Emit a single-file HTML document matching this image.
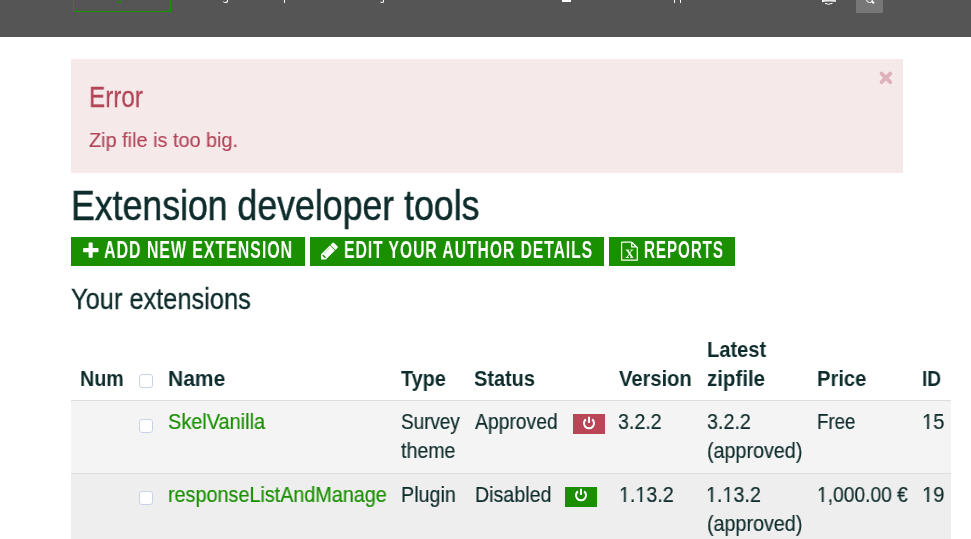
<!DOCTYPE html><html><head><meta charset="utf-8"><title>Extension developer tools</title><style>
*{margin:0;padding:0;box-sizing:border-box}
html,body{width:971px;height:539px;overflow:hidden;background:#fff;font-family:"Liberation Sans",sans-serif}
.t{position:absolute;white-space:nowrap;line-height:1;transform-origin:0 0;will-change:transform}
.r{position:absolute}
.one{display:inline-block;clip-path:polygon(0 0,100% 0,100% 15.8px,7.35px 15.8px,7.35px 100%,5.2px 100%,5.2px 15.8px,0 15.8px)}
</style></head><body>
<div class="r" style="left:0;top:0;width:971px;height:37px;background:#555"></div>
<div class="r" style="left:73px;top:-20px;width:98px;height:32px;border:1px solid #1a8f00"></div>
<div class="r" style="left:116px;top:-3px;width:5px;height:6px;border:1.5px solid #1a8f00;border-top:none;border-left:none;border-radius:0 0 3px 3px"></div>
<div class="r" style="left:223px;top:-3px;width:5px;height:6px;border:1.5px solid #fff;border-top:none;border-left:none;border-radius:0 0 3px 3px"></div>
<div class="r" style="left:284.2px;top:0;width:1.3px;height:3px;background:#fff"></div>
<div class="r" style="left:380px;top:-3px;width:4px;height:6px;border:1.5px solid #fff;border-top:none;border-left:none;border-radius:0 0 3px 3px"></div>
<div class="r" style="left:562px;top:0;width:9px;height:1.5px;background:#fff"></div>
<div class="r" style="left:673.8px;top:0;width:1.4px;height:3px;background:#fff"></div>
<div class="r" style="left:679.8px;top:0;width:1.4px;height:3px;background:#fff"></div>
<svg class="r" style="left:815px;top:0" width="30" height="8" viewBox="0 0 30 8"><path d="M7 0 H21 L20.8 1.9 L15 1.6 L9.5 1.8 L7.5 2.2 Z" fill="#fff" fill-opacity="0.85"/><path d="M7.6 0 V2" stroke="#fff" stroke-width="1.2"/><path d="M10 3.4 Q13.5 5.3 17.5 3.2" fill="none" stroke="#fff" stroke-width="1"/></svg>
<div class="r" style="left:856px;top:0;width:27px;height:13px;background:#777"></div>
<div class="r" style="left:866px;top:-4px;width:7px;height:7px;border:1.5px solid #fff;border-radius:50%"></div>
<div class="r" style="left:872px;top:1px;width:1.5px;height:3px;background:#fff;transform:rotate(-45deg)"></div>

<div class="r" style="left:71px;top:59px;width:832px;height:114px;background:#f6e9ea"></div>
<svg class="r" style="left:877.6px;top:69.6px" width="16" height="16" viewBox="0 0 16 16"><path d="M3.6 3.6 L12.2 12.2 M12.2 3.6 L3.6 12.2" stroke="#ddb2bb" stroke-width="3.9" stroke-linecap="round"/></svg>

<div class="r" style="left:71px;top:237px;width:234px;height:29px;background:#1a8f00"></div>
<div class="r" style="left:310px;top:237px;width:294px;height:29px;background:#1a8f00"></div>
<div class="r" style="left:609px;top:237px;width:126px;height:29px;background:#1a8f00"></div>
<svg class="r" style="left:78px;top:238px" width="26" height="26" viewBox="0 0 26 26"><rect x="10.6" y="4.6" width="4.1" height="15.2" rx="0.8" fill="#fff"/><rect x="5.1" y="9.9" width="15.4" height="4.3" rx="0.8" fill="#fff"/></svg>
<svg class="r" style="left:314px;top:238px" width="32" height="26" viewBox="0 0 32 26"><path d="M7 16.3 L15.85 7.45 L20.9 12.5 L11.8 21.6 L7 21.6 Z" fill="#fff"/><path d="M16.35 6.95 L18.4 4.9 Q19.25 4.05 20.1 4.9 L23.45 8.25 Q24.3 9.1 23.45 9.95 L21.4 12 Z" fill="#fff"/><path d="M9.2 17.5 L11 19.3" stroke="#1a8f00" stroke-width="1.6" stroke-linecap="round"/><path d="M9.6 15.9 L15.9 9.6" stroke="#1a8f00" stroke-width="0.6" stroke-opacity="0.6"/></svg>
<svg class="r" style="left:620px;top:241px" width="19" height="20" viewBox="0 0 19 20"><path d="M1.6 1.2 H11.7 L17.3 6.5 V19.1 H1.6 Z M11.7 1.2 V5.9 H17.3" fill="none" stroke="#fff" stroke-width="1.25" stroke-linejoin="round"/><path d="M7.3 9.1 L12.1 16.3" stroke="#fff" stroke-width="1.7"/><path d="M11.9 9.1 L7.1 16.3" stroke="#fff" stroke-width="0.9"/><path d="M5.7 9.0 H9.3 M10.4 9.0 H13.2 M5.7 16.4 H8.9 M10.3 16.4 H13.3" stroke="#fff" stroke-width="0.9"/></svg>

<div class="r" style="left:71px;top:400px;width:880px;height:1px;background:#ddd"></div>
<div class="r" style="left:71px;top:401px;width:880px;height:72px;background:#f4f4f4"></div>
<div class="r" style="left:71px;top:473px;width:880px;height:1px;background:#ddd"></div>
<div class="r" style="left:71px;top:474px;width:880px;height:65px;background:#eee"></div>

<div class="r" style="left:139px;top:374px;width:14px;height:14px;border:1px solid #cbd2e5;border-radius:3px;background:#fff"></div>
<div class="r" style="left:139px;top:419px;width:14px;height:14px;border:1px solid #cbd2e5;border-radius:3px;background:#fff"></div>
<div class="r" style="left:139px;top:491px;width:14px;height:14px;border:1px solid #cbd2e5;border-radius:3px;background:#fff"></div>

<div class="r" style="left:573px;top:414px;width:32px;height:20px;background:#b94556"></div>
<svg class="r" style="left:581px;top:414.5px" width="16" height="16" viewBox="0 0 16 16"><path d="M4.9 4.4 A5 5 0 1 0 11.1 4.4" fill="none" stroke="#fff" stroke-width="2"/><path d="M8 1.8 V8" stroke="#fff" stroke-width="2"/></svg>
<div class="r" style="left:565px;top:487px;width:32px;height:20px;background:#1a8f00"></div>
<svg class="r" style="left:573px;top:487px" width="16" height="16" viewBox="0 0 16 16"><path d="M4.9 4.4 A5 5 0 1 0 11.1 4.4" fill="none" stroke="#fff" stroke-width="2"/><path d="M8 1.8 V8" stroke="#fff" stroke-width="2"/></svg>

<span id="err" class="t" style="left:88.67px;top:82.00px;font-size:30.20px;font-weight:400;color:#b24456;transform:scaleX(0.8031);-webkit-text-stroke:0.30px #b24456;">Error</span>
<span id="zip" class="t" style="left:88.83px;top:130.01px;font-size:20.60px;font-weight:400;color:#b24456;transform:scaleX(0.9645);-webkit-text-stroke:0.15px #b24456;">Zip file is too big.</span>
<span id="h1" class="t" style="left:71.45px;top:185.01px;font-size:42.00px;font-weight:400;color:#0e2c2b;transform:scaleX(0.8491);-webkit-text-stroke:0.50px #0e2c2b;">Extension developer tools</span>
<span id="b1" class="t" style="left:104.32px;top:239.01px;font-size:23.00px;font-weight:700;color:#fff;transform:scaleX(0.6967);letter-spacing:1.30px;">ADD NEW EXTENSION</span>
<span id="b2" class="t" style="left:344.14px;top:239.01px;font-size:23.00px;font-weight:700;color:#fff;transform:scaleX(0.6861);letter-spacing:1.30px;">EDIT YOUR AUTHOR DETAILS</span>
<span id="b3" class="t" style="left:643.83px;top:239.01px;font-size:23.00px;font-weight:700;color:#fff;transform:scaleX(0.6632);letter-spacing:1.30px;">REPORTS</span>
<span id="h2" class="t" style="left:70.75px;top:285.01px;font-size:29.00px;font-weight:400;color:#0e2c2b;transform:scaleX(0.8759);-webkit-text-stroke:0.35px #0e2c2b;">Your extensions</span>
<span id="th1" class="t" style="left:79.91px;top:368.00px;font-size:22.00px;font-weight:700;color:#0e2c2b;transform:scaleX(0.8957);">Num</span>
<span id="th2" class="t" style="left:167.93px;top:368.00px;font-size:22.00px;font-weight:700;color:#0e2c2b;transform:scaleX(0.9552);">Name</span>
<span id="th3" class="t" style="left:401.02px;top:368.00px;font-size:22.00px;font-weight:700;color:#0e2c2b;transform:scaleX(0.9020);">Type</span>
<span id="th4" class="t" style="left:474.01px;top:368.00px;font-size:22.00px;font-weight:700;color:#0e2c2b;transform:scaleX(0.9061);">Status</span>
<span id="th5" class="t" style="left:619.23px;top:368.00px;font-size:22.00px;font-weight:700;color:#0e2c2b;transform:scaleX(0.9154);">Version</span>
<span id="th6" class="t" style="left:707.09px;top:339.00px;font-size:22.00px;font-weight:700;color:#0e2c2b;transform:scaleX(0.9125);">Latest</span>
<span id="th7" class="t" style="left:707.07px;top:368.00px;font-size:22.00px;font-weight:700;color:#0e2c2b;transform:scaleX(0.9311);">zipfile</span>
<span id="th8" class="t" style="left:816.70px;top:368.00px;font-size:22.00px;font-weight:700;color:#0e2c2b;transform:scaleX(0.9173);">Price</span>
<span id="th9" class="t" style="left:922.13px;top:368.00px;font-size:22.00px;font-weight:700;color:#0e2c2b;transform:scaleX(0.8700);">ID</span>
<span id="r1a" class="t" style="left:168.25px;top:411.00px;font-size:21.20px;font-weight:400;color:#1a8f00;transform:scaleX(0.9402);-webkit-text-stroke:0.20px #1a8f00;">SkelVanilla</span>
<span id="r1b" class="t" style="left:400.91px;top:411.00px;font-size:21.20px;font-weight:400;color:#0e2c2b;transform:scaleX(0.8923);-webkit-text-stroke:0.20px #0e2c2b;">Survey</span>
<span id="r1c" class="t" style="left:401.00px;top:440.00px;font-size:21.20px;font-weight:400;color:#0e2c2b;transform:scaleX(0.9241);-webkit-text-stroke:0.20px #0e2c2b;">theme</span>
<span id="r1d" class="t" style="left:475.37px;top:411.00px;font-size:21.20px;font-weight:400;color:#0e2c2b;transform:scaleX(0.9111);-webkit-text-stroke:0.20px #0e2c2b;">Approved</span>
<span id="r1e" class="t" style="left:618.30px;top:411.00px;font-size:21.20px;font-weight:400;color:#0e2c2b;transform:scaleX(0.9267);-webkit-text-stroke:0.20px #0e2c2b;">3.2.2</span>
<span id="r1f" class="t" style="left:706.95px;top:411.00px;font-size:21.20px;font-weight:400;color:#0e2c2b;transform:scaleX(0.9311);-webkit-text-stroke:0.20px #0e2c2b;">3.2.2</span>
<span id="r1g" class="t" style="left:707.10px;top:440.00px;font-size:21.20px;font-weight:400;color:#0e2c2b;transform:scaleX(0.9310);-webkit-text-stroke:0.20px #0e2c2b;">(approved)</span>
<span id="r1h" class="t" style="left:816.74px;top:411.00px;font-size:21.20px;font-weight:400;color:#0e2c2b;transform:scaleX(0.8810);-webkit-text-stroke:0.20px #0e2c2b;">Free</span>
<span id="r1i" class="t" style="left:921.68px;top:411.00px;font-size:21.20px;font-weight:400;color:#0e2c2b;transform:scaleX(0.9524);-webkit-text-stroke:0.20px #0e2c2b;"><span class="one">1</span>5</span>
<span id="r2a" class="t" style="left:168.25px;top:484.00px;font-size:21.20px;font-weight:400;color:#1a8f00;transform:scaleX(0.9336);-webkit-text-stroke:0.20px #1a8f00;">responseListAndManage</span>
<span id="r2b" class="t" style="left:400.58px;top:484.00px;font-size:21.20px;font-weight:400;color:#0e2c2b;transform:scaleX(0.9325);-webkit-text-stroke:0.20px #0e2c2b;">Plugin</span>
<span id="r2d" class="t" style="left:474.84px;top:484.00px;font-size:21.20px;font-weight:400;color:#0e2c2b;transform:scaleX(0.9263);-webkit-text-stroke:0.20px #0e2c2b;">Disabled</span>
<span id="r2e" class="t" style="left:618.72px;top:484.00px;font-size:21.20px;font-weight:400;color:#0e2c2b;transform:scaleX(0.9268);-webkit-text-stroke:0.20px #0e2c2b;"><span class="one">1</span>.<span class="one">1</span>3.2</span>
<span id="r2f" class="t" style="left:706.17px;top:484.00px;font-size:21.20px;font-weight:400;color:#0e2c2b;transform:scaleX(0.9304);-webkit-text-stroke:0.20px #0e2c2b;"><span class="one">1</span>.<span class="one">1</span>3.2</span>
<span id="r2g" class="t" style="left:707.10px;top:513.00px;font-size:21.20px;font-weight:400;color:#0e2c2b;transform:scaleX(0.9310);-webkit-text-stroke:0.20px #0e2c2b;">(approved)</span>
<span id="r2h" class="t" style="left:816.76px;top:484.00px;font-size:21.20px;font-weight:400;color:#0e2c2b;transform:scaleX(0.9071);-webkit-text-stroke:0.20px #0e2c2b;"><span class="one">1</span>,000.00 €</span>
<span id="r2i" class="t" style="left:921.68px;top:484.00px;font-size:21.20px;font-weight:400;color:#0e2c2b;transform:scaleX(0.9524);-webkit-text-stroke:0.20px #0e2c2b;"><span class="one">1</span>9</span>
</body></html>
